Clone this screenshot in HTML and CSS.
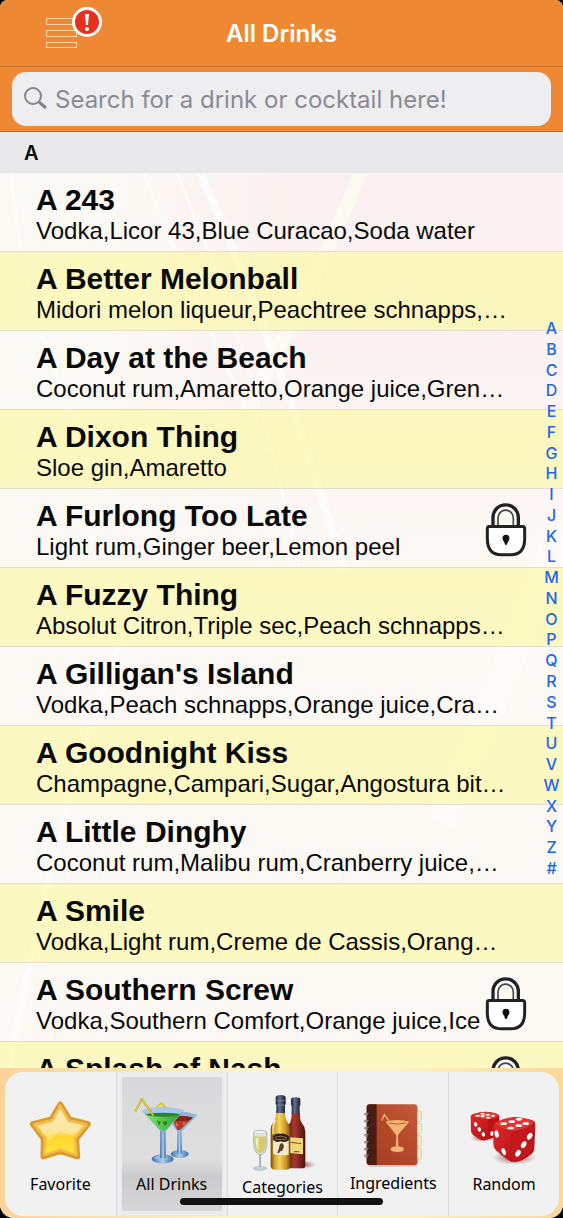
FILE: index.html
```html
<!DOCTYPE html>
<html lang="en">
<head>
    <meta charset="UTF-8">
    <meta name="viewport" content="width=device-width, initial-scale=1.0">
    <title>All Drinks</title>
    <link rel="stylesheet" href="styles.css">
</head>
<body>
    <!-- Shared padlock symbol -->
    <svg class="defs" aria-hidden="true">
        <symbol id="lock" viewBox="45 51 126 164">
            <path d="M69 122V97a38 38 0 0 1 76 0v25" fill="#fff" stroke="#222" stroke-width="10"/>
            <path d="M84 122V98a23 23 0 0 1 46 0v24" fill="#fbf9ee" stroke="#444" stroke-width="5"/>
            <path d="M57 124h101q6 0 6 6v31q0 48-42 48H94q-42 0-42-48v-31q0-6 5-6z" fill="#fff" stroke="#222" stroke-width="9"/>
            <path d="M108 149c14 0 12 15 5 22l-2 8h-6l-2-8c-7-7-9-22 5-22z" fill="#111"/>
        </symbol>
    </svg>

    <div class="screen">
        <header class="navbar">
            <button class="menu-button" type="button" aria-label="Menu">
                <svg width="60" height="52" viewBox="0 0 60 52">
                    <g fill="none" stroke="#ffd9a8" stroke-width="1">
                        <rect x="2.500" y="11.500" width="30" height="6"/>
                        <rect x="2.500" y="23.500" width="30" height="6"/>
                        <rect x="2.500" y="35.500" width="30" height="5"/>
                    </g>
                    <circle cx="43" cy="15" r="15" fill="#fff"/>
                    <circle cx="43" cy="15" r="12" fill="#e8301f"/>
                    <path d="M41 7h4l-1 11h-2z" fill="#fff"/>
                    <circle cx="43" cy="22" r="2" fill="#fff"/>
                </svg>
            </button>
            <h1>All Drinks</h1>
        </header>

        <form class="search-bar">
            <label class="search-field" for="search">
                <svg width="24" height="24" viewBox="0 0 24 24" fill="none" stroke="#85858a">
                    <circle cx="10" cy="9" r="8" stroke-width="2"/>
                    <path d="M16 15l7 6" stroke-width="3"/>
                </svg>
                <input type="text" id="search" placeholder="Search for a drink or cocktail here!">
            </label>
        </form>

        <main class="content">
            <!-- Light streaks behind the rows -->
            <svg class="streaks" viewBox="0 0 563 936" preserveAspectRatio="none" fill="none" stroke="#fff" aria-hidden="true">
                <path d="M195 30Q270 190 345 440" stroke-width="8" opacity=".6"/>
                <path d="M172 30Q255 220 300 440" stroke-width="3" opacity=".5"/>
                <path d="M140 30Q190 170 270 320" stroke-width="4" opacity=".4"/>
                <path d="M365 30Q325 130 240 290" stroke-width="14" stroke="#fcfbf4" opacity=".8"/>
                <path d="M10 30Q20 170 80 300" stroke-width="3" opacity=".5"/>
                <path d="M130 480Q50 690 0 990" stroke-width="6" opacity=".7"/>
                <path d="M563 390Q500 560 440 690" stroke-width="30" opacity=".25"/>
            </svg>
            <h2 class="section-title">A</h2>
            <ul class="drink-list">
                <li class="drink">
                    <h3>A 243</h3>
                    <p>Vodka,Licor 43,Blue Curacao,Soda water</p>
                </li>
                <li class="drink">
                    <h3>A Better Melonball</h3>
                    <p>Midori melon liqueur,Peachtree schnapps,…</p>
                </li>
                <li class="drink">
                    <h3>A Day at the Beach</h3>
                    <p>Coconut rum,Amaretto,Orange juice,Gren…</p>
                </li>
                <li class="drink">
                    <h3>A Dixon Thing</h3>
                    <p>Sloe gin,Amaretto</p>
                </li>
                <li class="drink">
                    <h3>A Furlong Too Late</h3>
                    <p>Light rum,Ginger beer,Lemon peel</p>
                    <svg class="lock"><use href="#lock"/></svg>
                </li>
                <li class="drink">
                    <h3>A Fuzzy Thing</h3>
                    <p>Absolut Citron,Triple sec,Peach schnapps…</p>
                </li>
                <li class="drink">
                    <h3>A Gilligan's Island</h3>
                    <p>Vodka,Peach schnapps,Orange juice,Cra…</p>
                </li>
                <li class="drink">
                    <h3>A Goodnight Kiss</h3>
                    <p>Champagne,Campari,Sugar,Angostura bit…</p>
                </li>
                <li class="drink">
                    <h3>A Little Dinghy</h3>
                    <p>Coconut rum,Malibu rum,Cranberry juice,…</p>
                </li>
                <li class="drink">
                    <h3>A Smile</h3>
                    <p>Vodka,Light rum,Creme de Cassis,Orang…</p>
                </li>
                <li class="drink">
                    <h3>A Southern Screw</h3>
                    <p>Vodka,Southern Comfort,Orange juice,Ice</p>
                    <svg class="lock"><use href="#lock"/></svg>
                </li>
                <li class="drink">
                    <h3>A Splash of Nash</h3>
                    <svg class="lock"><use href="#lock"/></svg>
                </li>
            </ul>
        </main>

        <!-- Alphabet index -->
        <nav class="index" aria-label="Index">
            <a href="#A">A</a><a href="#B">B</a><a href="#C">C</a><a href="#D">D</a><a href="#E">E</a><a href="#F">F</a><a href="#G">G</a><a href="#H">H</a><a href="#I">I</a><a href="#J">J</a><a href="#K">K</a><a href="#L">L</a><a href="#M">M</a><a href="#N">N</a><a href="#O">O</a><a href="#P">P</a><a href="#Q">Q</a><a href="#R">R</a><a href="#S">S</a><a href="#T">T</a><a href="#U">U</a><a href="#V">V</a><a href="#W">W</a><a href="#X">X</a><a href="#Y">Y</a><a href="#Z">Z</a><a href="#other">#</a>
        </nav>

        <footer class="tabbar">
            <div class="tabs">
                <button class="tab" type="button">
                    <svg width="76" height="76" viewBox="66 156 228 228">
                        <defs>
                            <linearGradient id="gold" x1="0" y1="0" x2="0" y2="1">
                                <stop offset="0" stop-color="#fde3a0"/>
                                <stop offset=".55" stop-color="#fbdc78"/>
                                <stop offset=".62" stop-color="#fdd630"/>
                                <stop offset="1" stop-color="#ffe43c"/>
                            </linearGradient>
                        </defs>
                        <path d="M181 193L208 238L264 252L229 296L232 350L181 334L130 350L131 296L98 252L154 238Z" fill="#d99a2b" stroke="#d99a2b" stroke-width="17" stroke-linejoin="round"/>
                        <path d="M181 197L206 241L259 254L225 295L229 345L181 329L133 345L135 295L103 254L156 241Z" fill="url(#gold)" stroke="#f3bc48" stroke-width="8" stroke-linejoin="round"/>
                        <path d="M181 207L202 245L246 256L220 287L180 272L148 303L141 293L115 258L160 246Z" fill="#fff" opacity=".25"/>
                    </svg>
                    <span>Favorite</span>
                </button>
                <button class="tab active" type="button">
                    <svg width="76" height="76" viewBox="39 21 228 228">
                        <defs>
                            <linearGradient id="stem" x1="0" x2="1">
                                <stop offset="0" stop-color="#3f6ea8"/>
                                <stop offset=".5" stop-color="#a9cdec"/>
                                <stop offset="1" stop-color="#3d6ba6"/>
                            </linearGradient>
                            <linearGradient id="green" x1="0" x2="1">
                                <stop offset="0" stop-color="#7be868"/>
                                <stop offset="1" stop-color="#2ea32c"/>
                            </linearGradient>
                        </defs>
                        <path d="M106 67l15-13 14 14" fill="none" stroke="#e3c51f" stroke-width="5"/>
                        <ellipse cx="176" cy="207" rx="27" ry="12" fill="url(#stem)"/>
                        <path d="M170 140h11l2 66h-15z" fill="url(#stem)"/>
                        <path d="M128 87q50-16 101 3l-47 50h-12z" fill="#8db7dc"/>
                        <path d="M150 95q35-7 66 2l-38 37q-5 2-10 0z" fill="#bd3527"/>
                        <path d="M152 97q32-8 63 1l-7 7q-25 5-56 2z" fill="#842418"/>
                        <path d="M165 110l8 11-10 7zM188 108l8 8-12 7z" fill="#e1624c"/>
                        <ellipse cx="125" cy="222" rx="33" ry="14" fill="url(#stem)"/>
                        <ellipse cx="120" cy="218" rx="20" ry="7" fill="#a8cbea" opacity=".6"/>
                        <path d="M118 132h15l2 88h-18z" fill="url(#stem)"/>
                        <path d="M63 77q62-20 126 0l-54 61q-9 5-17 0z" fill="#84b1d9"/>
                        <ellipse cx="126" cy="78" rx="63" ry="11" fill="#a7c9e6"/>
                        <path d="M75 89q50-10 101 0l-43 46q-8 4-15 0z" fill="url(#green)"/>
                        <ellipse cx="126" cy="89" rx="49" ry="6" fill="#27842a"/>
                        <path d="M108 106l12 5-7 11zM126 112l10-5 3 10-10 5z" fill="#267e25"/>
                        <path d="M43 80L62 42L97 91" fill="none" stroke="#b29a18" stroke-width="6" stroke-linejoin="round"/>
                        <path d="M43 80L62 42L97 91" fill="none" stroke="#f3e13d" stroke-width="3" stroke-linejoin="round"/>
                    </svg>
                    <span>All Drinks</span>
                </button>
                <button class="tab" type="button">
                    <svg width="76" height="82" viewBox="12 12 228 246">
                        <defs>
                            <linearGradient id="white-wine" x1="0" x2="1">
                                <stop offset="0" stop-color="#6b4a10"/>
                                <stop offset=".2" stop-color="#d9a32a"/>
                                <stop offset=".45" stop-color="#f3d65c"/>
                                <stop offset=".8" stop-color="#c98f1f"/>
                                <stop offset="1" stop-color="#70490c"/>
                            </linearGradient>
                            <linearGradient id="red-wine" x1="0" x2="1">
                                <stop offset="0" stop-color="#4a1310"/>
                                <stop offset=".4" stop-color="#a83830"/>
                                <stop offset="1" stop-color="#54110e"/>
                            </linearGradient>
                            <linearGradient id="cap" x1="0" x2="1">
                                <stop offset="0" stop-color="#1a2236"/>
                                <stop offset=".4" stop-color="#63728f"/>
                                <stop offset="1" stop-color="#151b2c"/>
                            </linearGradient>
                            <radialGradient id="shade">
                                <stop offset="0" stop-color="#7d3030" stop-opacity=".8"/>
                                <stop offset="1" stop-color="#7d3030" stop-opacity="0"/>
                            </radialGradient>
                        </defs>
                        <ellipse cx="185" cy="239" rx="43" ry="13" fill="url(#shade)"/>
                        <path d="M155 84h25q-1 24 7 32 9 10 9 24v102q0 8-12 8h-32q-12 0-12-8V140q0-14 8-24t7-32z" fill="url(#red-wine)"/>
                        <path d="M153 43q0-6 14-6t14 6v18l-2 2v23h-24V63l-2-2z" fill="url(#cap)"/>
                        <path d="M149 157l40 3v48l-40-4z" fill="#efd77c"/>
                        <path d="M153 172l31 4M162 200h16" stroke="#aa3d2a" stroke-width="3"/>
                        <path d="M108 78h27q-1 24 9 35 7 8 7 22v108q0 11-15 11h-29q-15 0-15-11V135q0-14 8-23 9-10 8-34z" fill="url(#white-wine)"/>
                        <path d="M107 38q0-8 15-8t15 8v20l-2 2v24h-26V60l-2-2z" fill="url(#cap)"/>
                        <path d="M110 47h25M110 60h25" stroke="#8391aa" stroke-width="2"/>
                        <path d="M99 153h47v56q-24 4-47-2z" fill="#f4e9c2"/>
                        <path d="M99 153q9-9 23-7 16-2 25 8v11q-9 9-25 4-13 5-23-5z" fill="#2c2517"/>
                        <path d="M104 158q18-9 37 1M104 163h36" stroke="#c79d3f" stroke-width="2" fill="none"/>
                        <path d="M125 174q10 6 5 16l-4 9-4-2-5 8-5-2 5-14q1-12 8-15z" fill="#54422d"/>
                        <path d="M106 105q-7 10-7 28v14" stroke="#fff4b5" stroke-width="4" fill="none"/>
                        <path d="M42 139q20-7 37 0 8 63-14 70h-8q-22-10-15-70z" fill="#e0e5e3" stroke="#949c9f" stroke-width="2"/>
                        <path d="M43 153q18 5 36 0 2 45-15 51h-7q-16-7-14-51z" fill="#d5cc6d"/>
                        <path d="M47 158h8v38q-8-8-8-38z" fill="#f7f2b7"/>
                        <ellipse cx="60" cy="141" rx="17" ry="4" fill="#f8faf9" stroke="#aab2b5"/>
                        <path d="M58 208h5v39h-5z" fill="#9caab2"/>
                        <ellipse cx="60" cy="250" rx="20" ry="6" fill="#c3d1dc" stroke="#8597a5"/>
                    </svg>
                    <span>Categories</span>
                </button>
                <button class="tab" type="button">
                    <svg width="76" height="74" viewBox="405 159 228 222">
                        <defs>
                            <linearGradient id="cover" x1="0" y1="1" x2="1" y2="0">
                                <stop offset="0" stop-color="#a53d21"/>
                                <stop offset=".5" stop-color="#b44729"/>
                                <stop offset="1" stop-color="#c85a3c"/>
                            </linearGradient>
                        </defs>
                        <rect x="443" y="198" width="150" height="182" rx="9" fill="#999" opacity=".5"/>
                        <g fill="#fff3d2" stroke="#d4b384" stroke-width="2">
                            <rect x="578" y="213" width="26" height="31" rx="4"/>
                            <rect x="578" y="250" width="26" height="31" rx="4"/>
                            <rect x="578" y="287" width="26" height="31" rx="4"/>
                            <rect x="578" y="325" width="26" height="32" rx="4"/>
                        </g>
                        <rect x="440" y="193" width="152" height="182" rx="9" fill="url(#cover)"/>
                        <path d="M449 193h21v182h-21q-9 0-9-9V202q0-9 9-9z" fill="#4a1c12"/>
                        <g fill="#331a12">
                            <circle cx="447" cy="223" r="6"/><circle cx="447" cy="244" r="6"/><circle cx="447" cy="265" r="6"/>
                            <circle cx="447" cy="286" r="6"/><circle cx="447" cy="307" r="6"/><circle cx="447" cy="328" r="6"/><circle cx="447" cy="348" r="6"/>
                        </g>
                        <path d="M446 220h-12v5h10M446 241h-12v5h10M446 262h-12v5h10M446 283h-12v5h10M446 304h-12v5h10M446 325h-12v5h10M446 345h-12v5h10" fill="none" stroke="#8d8683" stroke-width="3"/>
                        <path d="M497 245q35-10 71 0l-32 37q-2 3-2 8l1 29q17 2 17 9 0 8-20 8t-20-8q0-7 16-9l1-29q0-5-3-8z" fill="#f0b672"/>
                        <path d="M507 249q25 7 51 0" fill="none" stroke="#bd5b36" stroke-width="3"/>
                        <path d="M485 242l8-18 15 21" fill="none" stroke="#f0b672" stroke-width="4"/>
                    </svg>
                    <span>Ingredients</span>
                </button>
                <button class="tab" type="button">
                    <svg width="76" height="76" viewBox="15 6 228 228">
                        <defs>
                            <linearGradient id="die" x1="0" y1="0" x2="1" y2="1">
                                <stop offset="0" stop-color="#e42a2a"/>
                                <stop offset="1" stop-color="#a60c10"/>
                            </linearGradient>
                            <radialGradient id="die-shade">
                                <stop offset="0" stop-color="#600" stop-opacity=".6"/>
                                <stop offset="1" stop-color="#600" stop-opacity="0"/>
                            </radialGradient>
                        </defs>
                        <ellipse cx="160" cy="203" rx="66" ry="22" fill="url(#die-shade)"/>
                        <ellipse cx="65" cy="143" rx="36" ry="14" fill="url(#die-shade)"/>
                        <path d="M38 71q25-8 48-5 28 4 29 12v60l-43 13q-10 1-18-4l-17-11q-7-5-7-14l-1-41q0-8 9-10z" fill="url(#die)"/>
                        <path d="M34 75q28-9 53-7 25 3 25 9-2 6-31 10-26 0-47-12z" fill="#e93835"/>
                        <path d="M82 90q30-7 32-10v58l-38 11q5-8 6-59z" fill="#b81418"/>
                        <g fill="#fff">
                            <ellipse cx="65" cy="71" rx="7" ry="3"/><ellipse cx="80" cy="74" rx="7" ry="3"/><ellipse cx="96" cy="77" rx="6" ry="3"/>
                            <ellipse cx="50" cy="77" rx="7" ry="3"/><ellipse cx="65" cy="79" rx="7" ry="3"/><ellipse cx="82" cy="83" rx="7" ry="3"/>
                            <ellipse cx="44" cy="103" rx="5" ry="7" transform="rotate(-20 44 103)"/>
                            <ellipse cx="55" cy="118" rx="5" ry="7" transform="rotate(-20 55 118)"/>
                            <ellipse cx="67" cy="133" rx="5" ry="7" transform="rotate(-20 67 133)"/>
                            <ellipse cx="93" cy="131" rx="5" ry="7"/>
                        </g>
                        <path d="M108 95q31-14 57-14 46 5 54 13 5 5 4 14l-3 65q0 12-9 19-25 21-47 24-13 2-24-7-20-13-36-29-8-9-7-23l1-47q0-11 10-15z" fill="url(#die)"/>
                        <path d="M105 98q35-15 61-15 44 4 51 12-4 11-54 24-33 2-58-21z" fill="#e8312f"/>
                        <path d="M163 122q43-8 57-24l-3 75q-3 12-14 19-21 18-47 21-9-2-8-16l1-52q0-16 14-23z" fill="#c2171b"/>
                        <path d="M105 100q27 21 57 20 35-5 54-22" fill="none" stroke="#f2605b" stroke-width="3" opacity=".6"/>
                        <g fill="#fff">
                            <ellipse cx="174" cy="88" rx="10" ry="4"/><ellipse cx="152" cy="95" rx="10" ry="4"/><ellipse cx="128" cy="101" rx="10" ry="4"/>
                            <ellipse cx="194" cy="101" rx="10" ry="4"/><ellipse cx="173" cy="107" rx="10" ry="4"/><ellipse cx="149" cy="114" rx="10" ry="4"/>
                            <ellipse cx="107" cy="132" rx="6" ry="11" transform="rotate(-12 107 132)"/>
                            <ellipse cx="128" cy="185" rx="6" ry="11" transform="rotate(-20 128 185)"/>
                            <ellipse cx="206" cy="139" rx="7" ry="11" transform="rotate(32 206 139)"/>
                            <ellipse cx="188" cy="164" rx="7" ry="11" transform="rotate(32 188 164)"/>
                            <ellipse cx="171" cy="190" rx="7" ry="11" transform="rotate(32 171 190)"/>
                        </g>
                    </svg>
                    <span>Random</span>
                </button>
            </div>
        </footer>
        <div class="home-indicator"></div>
    </div>
</body>
</html>
```
FILE: styles.css
```css
* {
    box-sizing: border-box;
}

body {
    margin: 0;
    background-color: #000;
    font-family: "Liberation Sans", Arial, sans-serif;
    color: #0a0a0a;
}

h1, h2, h3, p, ul {
    margin: 0;
    padding: 0;
}

button {
    border: none;
    padding: 0;
    background: none;
    color: inherit;
    cursor: pointer;
}

.defs {
    display: none;
}

.screen {
    position: relative;
    display: flex;
    flex-direction: column;
    height: 100vh;
    overflow: hidden;
    border-radius: 8px 8px 14px 14px;
    background-color: #fdf9f4;
}

/* Top bar */
.navbar {
    display: grid;
    grid-template-columns: 1fr auto 1fr;
    align-items: center;
    height: 67px;
    padding: 0 44px;
    background-color: #ef8832;
    border-bottom: 1px solid #cb7029;
}

.menu-button {
    display: flex;
    justify-self: start;
}

.navbar h1 {
    font-family: Inter, sans-serif;
    font-size: 24px;
    font-weight: 600;
    color: #fff;
}

/* Search */
.search-bar {
    padding: 5px 12px;
    background-color: #ef8832;
    border-bottom: 1px solid #c56c2a;
}

.search-field {
    display: flex;
    align-items: center;
    gap: 8px;
    height: 54px;
    padding: 0 11px;
    border-radius: 14px;
    background-color: #eeeef0;
}

.search-field input {
    flex: 1;
    min-width: 0;
    border: none;
    padding: 0;
    outline: none;
    background: none;
    font-family: Inter, sans-serif;
    font-size: 24px;
}

.search-field input::placeholder {
    color: #8a8a8f;
    opacity: 1;
}

/* Drinks */
.content {
    position: relative;
    flex: 1;
    min-height: 0;
    overflow: hidden;
    background:
        linear-gradient(to bottom, rgba(252, 249, 244, 0) 15%, #fcf9f5 50%),
        linear-gradient(to right, #fbf9f4 20%, #fbf1f0 55%);
}

.streaks {
    position: absolute;
    inset: 0;
    width: 100%;
    height: 100%;
}

.section-title {
    position: relative;
    padding: 2px 24px 0;
    background-color: #e9e9eb;
    font-family: Inter, sans-serif;
    font-size: 20px;
    font-weight: 600;
    line-height: 39px;
}

.drink-list {
    list-style: none;
}

.drink {
    position: relative;
    height: 79px;
    padding: 11px 36px 0;
    border-bottom: 1px solid #e3dfd5;
    white-space: nowrap;
}

.drink:nth-child(even) {
    background-color: rgba(251, 247, 150, 0.55);
}

.drink h3 {
    font-size: 30px;
    line-height: 32px;
}

.drink p {
    font-size: 24px;
    line-height: 30px;
}

.lock {
    position: absolute;
    top: 13px;
    right: 36px;
    width: 42px;
    height: 55px;
}

.index {
    position: absolute;
    top: 318px;
    right: 0;
    display: flex;
    flex-direction: column;
    width: 23px;
    height: 46%;
    justify-content: space-between;
    text-align: center;
    font-family: Inter, sans-serif;
    font-size: 16px;
    font-weight: 500;
    line-height: 20px;
}

.index a {
    color: #2466e8;
    text-decoration: none;
}

/* Bottom tabs */
.tabbar {
    padding: 4px 4px 2px 5px;
    background: linear-gradient(to right, #fbd398, #fdf3c6 40%, #fdf3c6 70%, #fbd79c);
}

.tabs {
    display: grid;
    grid-template-columns: repeat(5, 1fr);
    height: 144px;
    border-radius: 18px;
    background-color: #f1f1f2;
}

.tab {
    display: flex;
    flex-direction: column;
    align-items: center;
    justify-content: center;
    gap: 4px;
    font-family: "Noto Sans", sans-serif;
    font-size: 16px;
    line-height: 24px;
    color: #000;
}

.tab + .tab {
    border-left: 1px solid #d9dadd;
}

.tab.active {
    background: linear-gradient(#d9d9db, #dededf 60%, #cbcbcd 75%, #d6d6d8) content-box, #ececed;
    padding: 5px;
}

.home-indicator {
    position: absolute;
    bottom: 13px;
    left: 32%;
    right: 32%;
    height: 7px;
    border-radius: 4px;
    background-color: #111;
}
```
